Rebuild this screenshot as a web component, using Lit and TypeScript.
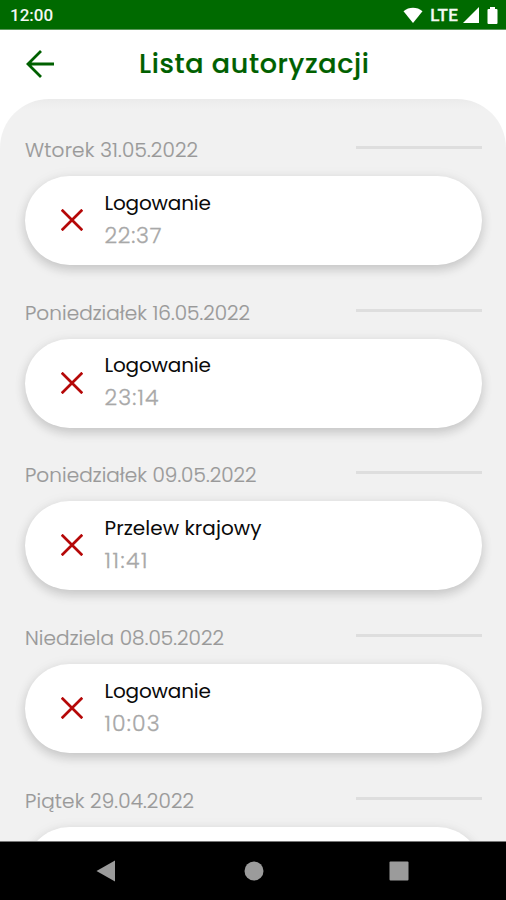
import { LitElement, html, css, nothing } from "lit";
import { customElement, property } from "lit/decorators.js";

/** A label whose letters are tracked so that it spans `span` pixels. */
@customElement("tracked-label")
class TrackedLabel extends LitElement {
  @property() text = "";
  @property({ type: Number }) span = 0;

  static styles = css`
    :host { display: block; white-space: nowrap; }
    .text { display: inline-block; }
  `;

  updated() {
    const el = this.renderRoot.querySelector(".text") as HTMLElement;
    el.style.letterSpacing = "0px";
    const natural = el.getBoundingClientRect().width;
    el.style.letterSpacing = `${(this.span - natural) / (this.text.length - 1)}px`;
  }

  render() {
    return html`<span class="text">${this.text}</span>`;
  }
}

interface Entry {
  day: string;
  daySpan: number;
  title?: string;
  titleSpan?: number;
  time?: string;
  timeSpan?: number;
}

const entries: Entry[] = [
  { day: "Wtorek 31.05.2022", daySpan: 173, title: "Logowanie", titleSpan: 106.5, time: "22:37", timeSpan: 57 },
  { day: "Poniedziałek 16.05.2022", daySpan: 225, title: "Logowanie", titleSpan: 106.5, time: "23:14", timeSpan: 54 },
  { day: "Poniedziałek 09.05.2022", daySpan: 231.5, title: "Przelew krajowy", titleSpan: 157, time: "11:41", timeSpan: 43 },
  { day: "Niedziela 08.05.2022", daySpan: 199, title: "Logowanie", titleSpan: 106.5, time: "10:03", timeSpan: 55 },
  { day: "Piątek 29.04.2022", daySpan: 169 },
];

@customElement("app-root")
class AppRoot extends LitElement {
  static styles = css`
    :host {
      display: flex;
      flex-direction: column;
      width: 506px;
      height: 900px;
      overflow: hidden;
      background: #fff;
      font-family: Poppins, Inter, "Liberation Sans", sans-serif;
    }
    svg { display: block; flex: none; }
    .status {
      flex: none;
      box-sizing: border-box;
      height: 30px;
      padding: 1px 8px 0 10px;
      display: flex;
      align-items: center;
      justify-content: space-between;
      background: #006a00;
      border-bottom: 1px solid #5c985c;
      color: #f3f8f3;
      font: 500 17px/28px Roboto, sans-serif;
    }
    .signals { display: flex; align-items: center; }
    .lte { margin: 0 5px 0 7px; letter-spacing: 0.2px; -webkit-text-stroke: 0.3px #f3f8f3; }
    .battery { margin-left: 8px; }
    .bar {
      flex: none;
      height: 69px;
      display: flex;
      align-items: center;
      padding-left: 25px;
    }
    .back { margin-bottom: 1px; }
    .title {
      margin: 0 0 1px 84px;
      color: #006000;
      font-size: 27px;
      font-weight: 500;
      line-height: 36px;
      -webkit-text-stroke: 0.2px #006000;
    }
    .sheet {
      flex: 1;
      min-height: 0;
      overflow: hidden;
      box-sizing: border-box;
      padding: 35px 24px 0 25px;
      border-radius: 49px 49px 0 0;
      background: linear-gradient(#ebebeb, #f1f1f1 10px);
    }
    .group { height: 162.7px; }
    .head {
      height: 42px;
      display: flex;
      align-items: flex-start;
      justify-content: space-between;
    }
    .day {
      color: #999;
      font-size: 20px;
      font-weight: 300;
      line-height: 32px;
      -webkit-text-stroke: 0.2px #999;
    }
    .rule { width: 126px; height: 3px; margin-top: 12px; background: #dedede; }
    .card {
      box-sizing: border-box;
      height: 89px;
      padding-left: 36px;
      display: flex;
      align-items: center;
      gap: 21.5px;
      border-radius: 45px;
      background: #fff;
      box-shadow: 0 5px 11px rgba(0, 0, 0, 0.15), 0 1px 14px rgba(0, 0, 0, 0.06);
    }
    .card svg { margin-bottom: 1px; }
    .name { color: #0a0a0a; font-size: 20px; font-weight: 400; line-height: 32px; }
    .time {
      color: #a8a8a8;
      font-size: 22px;
      font-weight: 300;
      line-height: 33px;
      -webkit-text-stroke: 0.3px #a8a8a8;
    }
    .copy { margin-top: -3px; }
    .nav {
      flex: none;
      box-sizing: border-box;
      height: 59px;
      padding: 0 97px 0 96px;
      display: flex;
      align-items: center;
      justify-content: space-between;
      background: #000;
      border-top: 1px solid #777;
    }
    .home { margin-left: 3px; }
  `;

  render() {
    return html`
      <div class="status">
        <span>12:00</span>
        <div class="signals">
          <svg width="20" height="17" viewBox="0 0 20 17">
            <path d="M.5 4.2C6-.4 14-.4 19.500 4.200L10 16Z" fill="#fff" />
          </svg>
          <span class="lte">LTE</span>
          <svg width="16" height="16" viewBox="0 0 16 16"><path d="M16 0V16H0Z" fill="#fff" /></svg>
          <svg class="battery" width="11" height="17" viewBox="0 0 11 17">
            <path d="M3 0H8V2H9.500Q10.500 2 10.500 3V16Q10.500 17 9.500 17H1.500Q.5 17 .5 16V3Q.5 2 1.500 2H3Z" fill="#fff" />
          </svg>
        </div>
      </div>
      <div class="bar">
        <svg class="back" width="30" height="30" viewBox="0 0 30 30" fill="none" stroke="#006000" stroke-width="2.800">
          <path d="M29 15H3M16 2L3 15L16 28" />
        </svg>
        <tracked-label class="title" text="Lista autoryzacji" .span=${230}></tracked-label>
      </div>
      <div class="sheet">
        ${entries.map(
          (e) => html`
            <div class="group">
              <div class="head">
                <tracked-label class="day" .text=${e.day} .span=${e.daySpan}></tracked-label>
                <div class="rule"></div>
              </div>
              <div class="card">
                ${e.title
                  ? html`
                      <svg width="22" height="22" viewBox="0 0 22 22" fill="none" stroke="#b50808" stroke-width="2.700">
                        <path d="M.7 .7L21.300 21.300M21.300 .7L.7 21.300" />
                      </svg>
                      <div class="copy">
                        <tracked-label class="name" .text=${e.title} .span=${e.titleSpan}></tracked-label>
                        <tracked-label class="time" .text=${e.time} .span=${e.timeSpan}></tracked-label>
                      </div>
                    `
                  : nothing}
              </div>
            </div>
          `
        )}
      </div>
      <div class="nav">
        <svg width="19" height="22" viewBox="0 0 19 22"><path d="M19 .5V21.500L.5 11Z" fill="#9b9b9b" /></svg>
        <svg class="home" width="20" height="20" viewBox="0 0 20 20"><circle cx="10" cy="10" r="9.500" fill="#9b9b9b" /></svg>
        <svg width="20" height="20" viewBox="0 0 20 20"><rect x=".5" y=".5" width="19" height="19" rx="1" fill="#9b9b9b" /></svg>
      </div>
    `;
  }
}
